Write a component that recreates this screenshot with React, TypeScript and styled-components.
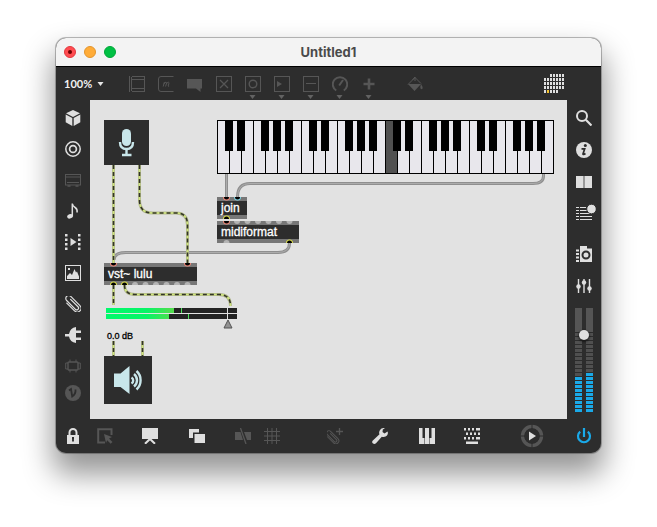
import React from "react";
import styled, { createGlobalStyle } from "styled-components";

const LIGHT = "#dfdfdf";
const DIM = "#565656";
const CHROME = "#2d2d2d";
const BLUE = "#1aa9e8";
const AQUA = "#c8e6ea";

const GlobalStyle = createGlobalStyle`
  *, *::before, *::after { box-sizing: border-box; }
  body { margin: 0; background: #fff; }
  button { appearance: none; border: 0; padding: 0; margin: 0; background: none; color: inherit; cursor: pointer; }
`;

const Page = styled.div`
  min-height: 100vh;
  display: flex;
  flex-direction: column;
  padding: 38px 56px 74px;
`;

const Window = styled.div`
  flex: 1;
  display: flex;
  flex-direction: column;
  border-radius: 10px;
  background: ${CHROME};
  box-shadow:
    0 0 0 1px rgba(0, 0, 0, 0.22),
    0 0 2px rgba(0, 0, 0, 0.2),
    0 18px 30px 3px rgba(0, 0, 0, 0.42);
`;

const TitleBar = styled.header`
  display: grid;
  grid-template-columns: 80px 1fr 80px;
  align-items: center;
  height: 29px;
  padding: 0 8px;
  border-bottom: 1px solid #000;
  border-radius: 10px 10px 0 0;
  background: #f3f3f3;
`;

const Lights = styled.div`
  display: flex;
  gap: 8px;
`;

const Light = styled.button<{ $fill: string; $edge: string }>`
  display: grid;
  place-items: center;
  width: 12px;
  height: 12px;
  border: 1px solid ${(p) => p.$edge};
  border-radius: 50%;
  background: ${(p) => p.$fill};
`;

const EditedDot = styled.span`
  width: 4px;
  height: 4px;
  border-radius: 50%;
  background: #6d0000;
`;

const Title = styled.h1`
  margin: 0;
  text-align: center;
  font: 700 13px/16px Inter, "Liberation Sans", sans-serif;
  color: #4a4a4a;
`;

const TopBar = styled.div`
  display: flex;
  align-items: center;
  height: 33px;
  padding: 0 36px 0 8px;
`;

const ZoomField = styled.label`
  display: flex;
  align-items: center;
  width: 58px;
  color: #f2f2f2;
`;

const ZoomSelect = styled.select`
  appearance: none;
  width: 33px;
  padding: 0;
  border: 0;
  background: none;
  color: inherit;
  font: 700 11px/16px Lato, "Open Sans", sans-serif;
`;

const ToolButton = styled.button<{ $tone?: string }>`
  display: flex;
  flex-direction: column;
  align-items: center;
  justify-content: center;
  width: 29px;
  height: 33px;
  color: ${(p) => p.$tone ?? DIM};
`;

const CaretSlot = styled.span`
  position: absolute;
  left: 11px;
  bottom: 1px;
  display: flex;
`;

const ToolSlot = styled.div`
  position: relative;
  display: flex;
`;

const Gap = styled.span<{ $size: number }>`
  flex: 0 1 ${(p) => p.$size}px;
`;

const Fill = styled.span`
  flex: 1;
`;

const Middle = styled.div`
  flex: 1;
  display: grid;
  grid-template-columns: 34px minmax(0, 1fr) 34px;
  min-height: 319px;
`;

const Side = styled.nav`
  display: flex;
  flex-direction: column;
  align-items: center;
  padding-top: 2px;
`;

const SideButton = styled.button<{ $height: number; $tone?: string }>`
  display: grid;
  place-items: center;
  width: 34px;
  height: ${(p) => p.$height}px;
  color: ${(p) => p.$tone ?? LIGHT};
`;

const BottomBar = styled.div`
  display: flex;
  align-items: center;
  height: 34px;
`;

const BottomButton = styled.button<{ $width: number; $tone?: string }>`
  display: grid;
  place-items: center;
  width: ${(p) => p.$width}px;
  height: 34px;
  color: ${(p) => p.$tone ?? LIGHT};
`;

const Volume = styled.div`
  position: relative;
  display: flex;
  gap: 4px;
  margin-top: 6px;
`;

const Column = styled.div`
  display: flex;
  flex-direction: column;
  gap: 1px;
`;

const ColumnHead = styled.span`
  width: 7px;
  height: 24px;
  background: #555;
`;

const Segment = styled.span<{ $on: boolean }>`
  width: 7px;
  height: 3px;
  background: ${(p) => (p.$on ? BLUE : "#505050")};
`;

const VolumeSlider = styled.input`
  position: absolute;
  inset: 0;
  width: 18px;
  height: 104px;
  margin: 0;
  appearance: none;
  background: none;
  writing-mode: vertical-lr;
  direction: rtl;
  &::-webkit-slider-thumb {
    appearance: none;
    width: 10px;
    height: 10px;
    border-radius: 50%;
    background: #e0e0e0;
    box-shadow: 0 1px 2px 1px rgba(0, 0, 0, 0.45);
  }
`;

const Patcher = styled.main`
  position: relative;
  overflow: hidden;
  background: #e2e2e2;
`;

const Node = styled.div<{ $x: number; $y: number }>`
  position: absolute;
  left: ${(p) => p.$x}px;
  top: ${(p) => p.$y}px;
`;

const AudioToggle = styled.button<{ $size: number }>`
  display: block;
  width: ${(p) => p.$size}px;
  height: ${(p) => p.$size}px;
  background: ${CHROME};
  color: ${AQUA};
`;

const ObjectBox = styled.div<{ $width: number }>`
  width: ${(p) => p.$width}px;
  height: 22px;
  padding-left: 4px;
  border: solid #777;
  border-width: 4px 0;
  background: ${CHROME};
  color: #fff;
  font: 12px/14px "Liberation Sans", Arial, sans-serif;
  white-space: nowrap;
  -webkit-text-stroke: 0.3px #fff;
`;

const Keys = styled.div`
  display: flex;
  border: 1px solid #000;
  border-right: 0;
  background: #000;
`;

const KeySlot = styled.div`
  position: relative;
  width: 12px;
  height: 52px;
  border-right: 1px solid #000;
`;

const WhiteKey = styled.button<{ $held: boolean }>`
  display: block;
  width: 11px;
  height: 52px;
  background: ${(p) => (p.$held ? "#505050" : "#e8e7ec")};
`;

const BlackKey = styled.button`
  position: absolute;
  z-index: 1;
  left: 7px;
  top: 0;
  width: 8px;
  height: 30px;
  background: #000;
`;

const Readout = styled.output`
  display: block;
  font: 9px/12px "Liberation Sans", Arial, sans-serif;
  color: #000;
  -webkit-text-stroke: 0.3px #000;
`;

const Wires = styled.svg`
  position: absolute;
  left: 0;
  top: 0;
  pointer-events: none;
`;

const Drawing = styled.svg`
  display: block;
`;

type IconProps = { size?: number; box?: number; children: React.ReactNode };
const Icon = ({ size = 16, box = 16, children }: IconProps) => (
  <Drawing width={size} height={size} viewBox={`0 0 ${box} ${box}`} fill="none" stroke="currentColor" aria-hidden="true">
    {children}
  </Drawing>
);

const solid = { fill: "currentColor", stroke: "none" };

const ClipShape = () => (
  <g strokeWidth="1.2" strokeLinecap="round" transform="rotate(-45 8 8)">
    <path d="M4.200 3v11a3.800 3.800 0 0 0 7.600 0V1a2.900 2.900 0 0 0-5.800 0v12.500a1.800 1.800 0 0 0 3.600 0V3" />
  </g>
);

const Frame = () => <rect x=".5" y=".5" width="15" height="15" />;

const topTools: { label: string; caret?: boolean; art: React.ReactNode }[] = [
  { label: "Object", art: <><path d="M.5 0v16M2.5 1v14M15.5 1v14" /><path d="M3 .5h13M3 3.500h13M3 12.500h13M3 15.500h13" /></> },
  {
    label: "Message",
    art: <><path d="M15.5.5H3Q.5.5.5 3v10q0 2.500 2.500 2.500h12.500" /><path d="M5.200 10.500l1.200-4.500M6 8q1-2 2-1.800t.4 1.600l-.8 2.700M8.400 8q1-2 2-1.800t.4 1.600l-.6 2.200q0 .6.900.2" /></>,
  },
  { label: "Comment", art: <path {...solid} d="M0 3h15v9.500h-1.500V16l-4.500-3.500H0z" /> },
  { label: "Toggle", art: <><Frame /><path d="M4 4l8 8M12 4l-8 8" strokeWidth="1.300" /></> },
  { label: "Button", caret: true, art: <><Frame /><circle cx="8" cy="8" r="3.800" strokeWidth="1.400" /></> },
  { label: "Number", caret: true, art: <><Frame /><path {...solid} d="M3 5l5 3-5 3z" /></> },
  { label: "Slider", caret: true, art: <><Frame /><path d="M3 7.500h10" /></> },
  { label: "Dial", caret: true, art: <><path d="M4.200 14.500A7.200 7.200 0 1 1 11.800 14.500" strokeWidth="2" /><path d="M7.200 9.500L11 4" strokeWidth="2" /></> },
  { label: "Add", caret: true, art: <path d="M8 2.500v11M2.500 8h11" strokeWidth="2.600" /> },
];

const Cube = (
  <g {...solid}>
    <path d="M8 0l7 3.300-7 3.700L1 3.300z" />
    <path d="M.7 4.600l6.600 3.500V16L.7 12.300z" />
    <path d="M15.300 4.600L8.700 8.100V16l6.600-3.700z" />
  </g>
);

const leftTools: { label: string; dim?: boolean; height?: number; art: React.ReactNode }[] = [
  { label: "Packages", art: Cube },
  { label: "Objects", art: <><circle cx="8" cy="8" r="7.200" strokeWidth="1.500" /><circle cx="8" cy="8" r="3.400" strokeWidth="1.700" /></> },
  { label: "Devices", dim: true, art: <><rect x=".5" y="2.500" width="15" height="10.500" /><path d="M1 5h14M2 10.500h12" /><path d="M2.500 14h3M10.500 14h3" strokeWidth="1.500" /></> },
  { label: "Audio", art: <><ellipse {...solid} cx="5" cy="13.300" rx="2.900" ry="2.200" transform="rotate(-20 5 13.300)" /><path d="M7.300 13.500V.5q.3 2.500 2.800 4t2 5" strokeWidth="1.500" /></> },
  {
    label: "Video",
    art: (
      <g {...solid}>
        <path d="M5.500 4l6 4-6 4z" />
        {[0, 4.5, 9, 13.5].map((y) => <path key={y} d={`M0 ${y}h2.500v2.500H0zM13 ${y}h2.500v2.500H13z`} />)}
      </g>
    ),
  },
  { label: "Images", art: <><Frame /><path {...solid} d="M2 14v-3l3-3 2 2 2.500-6L11 7.500l1-1 2 5V14zM3 3h2v2H3z" /></> },
  { label: "Snippets", art: <ClipShape /> },
  { label: "Plug-ins", art: <path {...solid} d="M11 0v3.500h5V6h-5v4.500h5V13h-5v3Q5 15 4 9.500H0v-2.500h4Q5 1 11 0z" /> },
  { label: "Hardware", dim: true, art: <><rect x="3" y="4" width="10" height="8" rx="1" strokeWidth="1.400" /><path d="M3 5H.7v6H3M13 5h2.300v6H13M5 4V1.500M11 4V1.500M5 12v2.500M11 12v2.500" /></> },
  { label: "Vizzie", dim: true, height: 23, art: <><circle {...solid} cx="8" cy="8" r="8" /><path d="M4 5.500l2-1.500 1.200 7.500Q11 9 10.500 4.500" stroke={CHROME} strokeWidth="1.800" /></> },
];

const rightTools: { label: string; after?: boolean; art: React.ReactNode }[] = [
  { label: "Search", art: <><circle cx="6" cy="6" r="5" strokeWidth="2" /><path d="M9.800 9.800l5.700 5.700" strokeWidth="2.200" /></> },
  { label: "Inspector", art: <><circle {...solid} cx="8" cy="8" r="8" /><circle cx="9.300" cy="3.500" r="1.500" fill={CHROME} stroke="none" /><path d="M5.500 6.800h3.200L7 12q0 1.200 2.500-.5" stroke={CHROME} strokeWidth="1.700" /></> },
  { label: "Reference", art: <><path {...solid} d="M0 2h7v12H0zM9 2h7v12H9z" /><path d="M8 2v12" stroke="#999" strokeWidth="2" /></> },
  { label: "Console", art: <><path d="M0 1.500h10M0 4.500h11M0 7.500h16M0 10.500h16M0 13.500h16" /><path d="M3.500 0v16" stroke={CHROME} /></> },
  { label: "Snapshots", after: true, art: <><path {...solid} d="M4 2.500V0h7v2.500h5V16H4zM0 3.500h3v2H0zM0 7h3v2H0zM0 10.500h3v2H0zM0 14h3v2H0z" /><circle cx="10" cy="9" r="3.500" stroke={CHROME} strokeWidth="2" /></> },
  { label: "Parameters", art: <><path d="M2.500 1v14M8 1v14M13.500 1v14" strokeWidth="1.400" /><g {...solid}><circle cx="2.500" cy="8.500" r="2.200" /><circle cx="8" cy="4.500" r="2.200" /><circle cx="13.500" cy="10.500" r="2.200" /></g></> },
];

const SelectArt = <><path d="M8 14.500H1.200V1.200h13.300V7" strokeWidth="2" /><path {...solid} d="M7 6l8 3-3 1.500 3.500 3.500-1.800 1.800-3.500-3.500L9 15z" /></>;
const PresentArt = <><path {...solid} d="M0 0h16v11H0z" /><path d="M3 15.800L8 11l5 4.800" strokeWidth="2" /></>;
const WindowsArt = <g {...solid}><path d="M0 1h10v3.500H4V10H0z" /><path d="M5.500 6H16v9H5.500z" /></g>;
const SnapArt = <><path {...solid} d="M0 4h5.500l2.500 8H0zM9 4h7v8h-4z" /><path d="M5.500 0l5.500 16" strokeWidth="1.300" /></>;
const GridArt = <path d="M3.500 0v16M8 0v16M12.500 0v16M0 3.500h16M0 8h16M0 12.500h16" />;
const ClipAddArt = <><g transform="translate(-1 3) scale(.8)"><ClipShape /></g><path d="M12.500 0v7M9 3.500h7" strokeWidth="1.300" /></>;
const WrenchArt = <path {...solid} d="M15.500 3.500l-3 2-2-1.500.3-2.500L13 .2Q9.500-.5 8 2t-.5 4.200L.6 12.700Q-.5 14.500 1 15.500t3-.2l5.800-6.500Q13.500 9.500 15 7.500t.5-4z" />;
const PianoArt = <g {...solid}><path d="M0 0h3.500v10H5v6H0zM5.500 10H6V0h4v10h.5v6h-5zM11 10h1.500V0H16v16h-5z" /></g>;
const KeyboardArt = (
  <g {...solid}>
    {[0, 4, 8, 12].map((x) => <path key={x} d={`M${x} 0h2v2.500h-2zM${x + 2} 4.500h2V7h-2zM${x} 9h2v2.500h-2z`} />)}
    <path d="M14 0h2v2.500h-2zM14 9h2v2.500h-2zM2 13.500h12V16H2z" />
  </g>
);
const PlayArt = (
  <>
    <circle cx="12" cy="12" r="9.500" stroke="#565656" strokeWidth="3.400" />
    <path d="M12 0v24M0 12h24" stroke={CHROME} />
    <circle cx="12" cy="12" r="7.500" fill={CHROME} stroke="none" />
    <path {...solid} d="M9 7.500l7 4.500-7 4.500z" />
  </>
);
const LockArt = <><path {...solid} d="M2 7h12v9H2z" /><path d="M4.500 7V4.500a3.500 3.500 0 0 1 7 0V7" strokeWidth="2" /><path d="M8 9.500v4M7 10h2" stroke={CHROME} strokeWidth="1.800" /></>;
const PowerArt = <><path d="M4.200 3.600a6 6 0 1 0 7.600 0" strokeWidth="2.200" /><path d="M8 0v9" strokeWidth="2.200" /></>;

const Caret = ({ color }: { color?: string }) => (
  <Drawing width="7" height="4" viewBox="0 0 7 4" aria-hidden="true">
    <path d="M.5 0h6L3.500 4z" fill={color ?? "currentColor"} />
  </Drawing>
);

const dots: [number, number][] = [2, 7, 7, 7, 5].flatMap((n, row) =>
  Array.from({ length: row === 0 ? 5 : n }, (_, i) => [row === 0 ? i + 2 : i, row] as [number, number])
);

const Logo = () => (
  <Drawing width="21" height="20" viewBox="0 0 21 20" role="img" aria-label="Max">
    {dots.map(([c, r]) => (
      <rect key={`${c}-${r}`} x={c * 3} y={r * 4} width="2" height="3" fill={c === 1 && r === 4 ? "#f2c230" : LIGHT} />
    ))}
  </Drawing>
);

const signal = [
  "M23.500 65V163",
  "M49.500 65V100Q49.500 113 62.500 113H86Q97.500 113 97.500 125V163",
  "M23.500 185V205",
  "M34.500 185Q34.500 194.500 45 194.500H129Q140.500 194.500 140.500 206",
  "M23.500 241V256",
  "M52.500 241V256",
];
const control = [
  "M136.500 74V97",
  "M453.500 74V76Q453.500 83.500 443 83.500H160Q147.500 83.500 147.500 97",
  "M199.500 143Q199.500 152.500 188 152.500H36Q24 152.500 24 160",
];

type Port = [x: number, y: number, down: boolean, rim: string];
const PINK = "#f08878";
const YELLOW = "#d9dc4a";
const livePorts: Port[] = [
  [136.5, 97, true, PINK],
  [147.5, 97, true, "#7fd6e4"],
  [136.5, 119, false, YELLOW],
  [136.5, 121, true, PINK],
  [199.5, 143, false, YELLOW],
  [23.5, 163, true, PINK],
  [97.5, 163, true, PINK],
  [23.5, 185, false, YELLOW],
  [34.5, 185, false, YELLOW],
];
const idlePorts: Port[] = [
  ...[147, 157.5, 168, 178.5, 189, 199.5].map((x): Port => [x, 121, true, ""]),
  [136.5, 143, false, ""],
  ...[45, 55.5, 66, 76.5, 87, 97.5].map((x): Port => [x, 185, false, ""]),
];
const half = ([x, y, down]: Port, r: number) => `M${x - r} ${y}A${r} ${r} 0 0 ${down ? 0 : 1} ${x + r} ${y}z`;

const Patch = () => (
  <Wires width="477" height="319" viewBox="0 0 477 319" fill="none" aria-hidden="true">
    {control.map((d) => (
      <g key={d}>
        <path d={d} stroke="#8f8f8f" strokeWidth="3" />
        <path d={d} stroke="#acacac" strokeWidth="1" />
      </g>
    ))}
    {signal.map((d) => (
      <g key={d}>
        <path d={d} stroke="#b3b890" strokeWidth="3" />
        <path d={d} stroke="#cfe57c" strokeWidth="1.500" />
        <path d={d} stroke="#33332a" strokeWidth="1.600" strokeDasharray="4 3" />
      </g>
    ))}
    {idlePorts.map((p) => <path key={p.join()} d={half(p, 3)} fill="#b4b4b4" />)}
    {livePorts.map((p) => (
      <g key={p.join()}>
        <path d={half(p, 3.5)} fill={p[3]} />
        <path d={half(p, 2.5)} fill="#000" />
      </g>
    ))}
  </Wires>
);

const LevelMeter = () => (
  <Drawing width="132" height="21" viewBox="0 0 132 21" role="img" aria-label="Output level">
    <defs>
      <linearGradient id="level" x1="0" x2="68" y1="0" y2="0" gradientUnits="userSpaceOnUse">
        <stop offset="0" stopColor="#00fa6c" />
        <stop offset="0.6" stopColor="#08f466" />
        <stop offset="1" stopColor="#56dc4c" />
      </linearGradient>
    </defs>
    <path d="M0 0h131v5H0zM0 6h131v5H0z" fill="#232323" />
    <path d="M0 0h68v5H0zM0 6h63v5H0z" fill="url(#level)" />
    <path d="M75 0h1v5h-1zM82 6h1v5h-1z" fill="#4be058" />
    <path d="M121 0h1v11h-1z" fill="#e2e2e2" />
    <path d="M122 12l4 8h-8z" fill="#929292" stroke="#555" />
  </Drawing>
);

const hasSharp = (i: number) => [0, 1, 3, 4, 5].includes(i % 7);

export default function App() {
  return (
    <>
      <GlobalStyle />
      <Page>
        <Window>
          <TitleBar>
            <Lights>
              <Light $fill="#ff4c50" $edge="#e2383e" aria-label="Close"><EditedDot /></Light>
              <Light $fill="#ffac38" $edge="#e4952c" aria-label="Minimize" />
              <Light $fill="#00c044" $edge="#00a638" aria-label="Full screen" />
            </Lights>
            <Title>Untitled1</Title>
          </TitleBar>

          <TopBar>
            <ZoomField>
              <ZoomSelect aria-label="Zoom" defaultValue="100%">
                <option>50%</option>
                <option>100%</option>
                <option>200%</option>
              </ZoomSelect>
              <Caret color="#e6e6e6" />
            </ZoomField>
            {topTools.map((t) => (
              <ToolSlot key={t.label}>
                <ToolButton aria-label={t.label}><Icon>{t.art}</Icon></ToolButton>
                {t.caret && <CaretSlot><Caret color="#626262" /></CaretSlot>}
              </ToolSlot>
            ))}
            <Gap $size={17} />
            <ToolButton aria-label="Format">
              <Icon>
                <path d="M1 8.500L8 1.500l6 6M5.500 4L8 1v4" />
                <path {...solid} d="M1 8h13l-6.500 7zM14 8q2 3 1.500 4.500t-2 0Q13 11 14 8z" />
              </Icon>
            </ToolButton>
            <Fill />
            <Logo />
          </TopBar>

          <Middle>
            <Side aria-label="Browsers">
              {leftTools.map((t) => (
                <SideButton key={t.label} aria-label={t.label} $height={t.height ?? 31} $tone={t.dim ? DIM : LIGHT}>
                  <Icon>{t.art}</Icon>
                </SideButton>
              ))}
            </Side>

            <Patcher>
              <Node $x={14} $y={20}>
                <AudioToggle $size={45} aria-label="Microphone input">
                  <Icon size={45} box={45}>
                    <rect {...solid} x="18" y="9" width="9" height="17" rx="4.500" />
                    <path d="M16 22q0 7 6.500 7t6.500-7" strokeWidth="2.400" />
                    <path d="M22.500 29v6M18 35h9.500" strokeWidth="2.400" />
                  </Icon>
                </AudioToggle>
              </Node>
              <Node $x={127} $y={20}>
                <Keys role="group" aria-label="Keyboard">
                  {Array.from({ length: 28 }, (_, i) => (
                    <KeySlot key={i}>
                      <WhiteKey $held={i === 14} aria-label={`${"CDEFGAB"[i % 7]}${Math.floor(i / 7) + 1}`} />
                      {hasSharp(i) && <BlackKey aria-label={`${"CDEFGAB"[i % 7]} sharp ${Math.floor(i / 7) + 1}`} />}
                    </KeySlot>
                  ))}
                </Keys>
              </Node>
              <Node $x={127} $y={97}><ObjectBox $width={30}>join</ObjectBox></Node>
              <Node $x={127} $y={121}><ObjectBox $width={82}>midiformat</ObjectBox></Node>
              <Node $x={14} $y={163}><ObjectBox $width={93}>vst~ lulu</ObjectBox></Node>
              <Node $x={16} $y={208}><LevelMeter /></Node>
              <Node $x={17} $y={230}><Readout>0.0 dB</Readout></Node>
              <Node $x={14} $y={256}>
                <AudioToggle $size={48} aria-label="Audio output">
                  <Icon size={48} box={48}>
                    <path {...solid} d="M10 17.500h6.500L25.500 10v28l-9-7H10z" />
                    <path d="M27.500 21.500a3.500 3.500 0 0 1 0 6M30 18a8 8 0 0 1 0 12.500M32.500 15a12.500 12.500 0 0 1 0 18.500" strokeWidth="2.400" />
                  </Icon>
                </AudioToggle>
              </Node>
              <Patch />
            </Patcher>

            <Side aria-label="Panels">
              {rightTools.map((t) => (
                <React.Fragment key={t.label}>
                  {t.after && <Gap $size={8} />}
                  <SideButton aria-label={t.label} $height={32}>
                    {t.label === "Console" ? (
                      <Drawing width="24" height="20" viewBox="-4 -2 24 20" fill="none" stroke="currentColor">
                        {t.art}
                        <circle cx="15.500" cy="3" r="4.800" fill={LIGHT} stroke={CHROME} />
                      </Drawing>
                    ) : (
                      <Icon>{t.art}</Icon>
                    )}
                  </SideButton>
                </React.Fragment>
              ))}
              <Volume>
                {[9, 10].map((lit) => (
                  <Column key={lit}>
                    <ColumnHead />
                    {Array.from({ length: 20 }, (_, i) => <Segment key={i} $on={i >= 20 - lit} />)}
                  </Column>
                ))}
                <VolumeSlider type="range" min={0} max={100} defaultValue={77} aria-label="Volume" />
              </Volume>
            </Side>
          </Middle>

          <BottomBar>
            <BottomButton $width={34} aria-label="Lock"><Icon>{LockArt}</Icon></BottomButton>
            <BottomButton $width={29} $tone={DIM} aria-label="Operate while unlocked"><Icon>{SelectArt}</Icon></BottomButton>
            <Gap $size={17} />
            <BottomButton $width={28} aria-label="Presentation mode"><Icon>{PresentArt}</Icon></BottomButton>
            <Gap $size={19} />
            <BottomButton $width={28} aria-label="Patcher windows"><Icon>{WindowsArt}</Icon></BottomButton>
            <Gap $size={17} />
            <BottomButton $width={29} $tone={DIM} aria-label="Mute"><Icon>{SnapArt}</Icon></BottomButton>
            <BottomButton $width={29} $tone={DIM} aria-label="Grid"><Icon>{GridArt}</Icon></BottomButton>
            <Gap $size={34} />
            <BottomButton $width={29} $tone={DIM} aria-label="Save snippet"><Icon>{ClipAddArt}</Icon></BottomButton>
            <Gap $size={17} />
            <BottomButton $width={28} aria-label="Debug"><Icon>{WrenchArt}</Icon></BottomButton>
            <Gap $size={19} />
            <BottomButton $width={28} aria-label="MIDI mapping"><Icon>{PianoArt}</Icon></BottomButton>
            <Gap $size={17} />
            <BottomButton $width={28} aria-label="Key mapping"><Icon>{KeyboardArt}</Icon></BottomButton>
            <Gap $size={31} />
            <BottomButton $width={30} aria-label="Play transport"><Icon size={24} box={24}>{PlayArt}</Icon></BottomButton>
            <Fill />
            <BottomButton $width={34} $tone={BLUE} aria-label="Audio on"><Icon>{PowerArt}</Icon></BottomButton>
          </BottomBar>
        </Window>
      </Page>
    </>
  );
}
